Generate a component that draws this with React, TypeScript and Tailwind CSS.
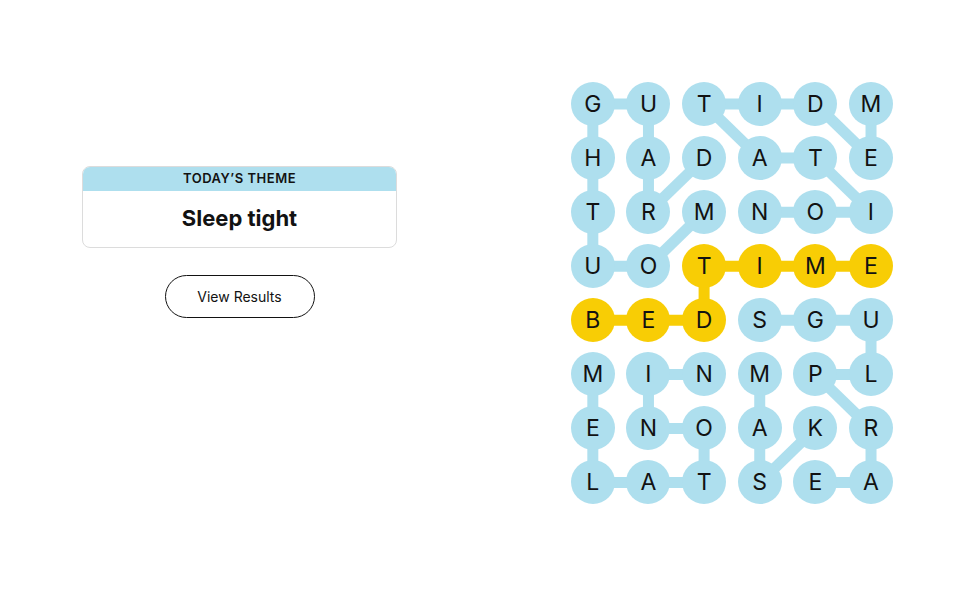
const LETTERS = [
  'GUTIDM',
  'HADATE',
  'TRMNOI',
  'UOTIME',
  'BEDSGU',
  'MINMPL',
  'ENOAKR',
  'LATSEA',
]

// cells of the found spangram
const SPANGRAM = new Set(['3,2', '3,3', '3,4', '3,5', '4,0', '4,1', '4,2'])

// [row, col] pairs joined by a line
type Link = [number, number, number, number]

const BLUE_LINKS: Link[] = [
  // MOUTHGUARD
  [2, 2, 3, 1], [3, 1, 3, 0], [3, 0, 2, 0], [2, 0, 1, 0], [1, 0, 0, 0],
  [0, 0, 0, 1], [0, 1, 1, 1], [1, 1, 2, 1], [2, 1, 1, 2],
  // MEDITATION
  [0, 5, 1, 5], [1, 5, 0, 4], [0, 4, 0, 3], [0, 3, 0, 2], [0, 2, 1, 3],
  [1, 3, 1, 4], [1, 4, 2, 5], [2, 5, 2, 4], [2, 4, 2, 3],
  // EARPLUGS
  [7, 4, 7, 5], [7, 5, 6, 5], [6, 5, 5, 4], [5, 4, 5, 5], [5, 5, 4, 5],
  [4, 5, 4, 4], [4, 4, 4, 3],
  // MELATONIN
  [5, 0, 6, 0], [6, 0, 7, 0], [7, 0, 7, 1], [7, 1, 7, 2], [7, 2, 6, 2],
  [6, 2, 6, 1], [6, 1, 5, 1], [5, 1, 5, 2],
  // MASK
  [5, 3, 6, 3], [6, 3, 7, 3], [7, 3, 6, 4],
]

const YELLOW_LINKS: Link[] = [
  [4, 0, 4, 1], [4, 1, 4, 2], [4, 2, 3, 2], [3, 2, 3, 3], [3, 3, 3, 4], [3, 4, 3, 5],
]

const CW = 55.64
const RH = 54.07
const cx = (c: number) => CW / 2 + c * CW
const cy = (r: number) => RH / 2 + r * RH

function Board() {
  return (
    <div className="relative">
      <svg className="absolute inset-0" width={CW * 6} height={RH * 8}>
        {BLUE_LINKS.map(([r1, c1, r2, c2], i) => (
          <line key={'b' + i} x1={cx(c1)} y1={cy(r1)} x2={cx(c2)} y2={cy(r2)} stroke="#aedfee" strokeWidth={11} />
        ))}
        {YELLOW_LINKS.map(([r1, c1, r2, c2], i) => (
          <line key={'y' + i} x1={cx(c1)} y1={cy(r1)} x2={cx(c2)} y2={cy(r2)} stroke="#f8cd05" strokeWidth={11} />
        ))}
      </svg>
      <div className="relative grid grid-cols-[repeat(6,55.64px)] grid-rows-[repeat(8,54.07px)]">
        {LETTERS.map((row, r) =>
          row.split('').map((ch, c) => (
            <div key={r + '-' + c} className="flex items-center justify-center">
              <button
                className={`flex h-[44px] w-[44px] items-center justify-center rounded-full text-[23px] leading-none text-[#121212] ${
                  SPANGRAM.has(r + ',' + c) ? 'bg-[#f8cd05]' : 'bg-[#aedfee]'
                }`}
              >
                {ch}
              </button>
            </div>
          ))
        )}
      </div>
    </div>
  )
}

export default function App() {
  return (
    <div className="flex h-[608px] w-[978px] items-start gap-[168px] bg-white pl-[82px] pt-[77px] font-['Inter','Liberation_Sans',sans-serif] text-[#121212]">
      <div className="mt-[89px] flex w-[315px] flex-col items-center">
        <div className="w-full overflow-hidden rounded-lg border border-[#dcdcdc]">
          <div className="flex h-[24px] items-center justify-center bg-[#aedfee] text-[13px] font-semibold uppercase tracking-[0.04em]">
            Today’s Theme
          </div>
          <div className="flex h-[56px] items-center justify-center pb-[1px] text-[22px] font-bold">Sleep tight</div>
        </div>
        <button className="mt-[27px] h-[43px] w-[150px] rounded-full border border-[#121212] text-[14px]">
          View Results
        </button>
      </div>
      <Board />
    </div>
  )
}
